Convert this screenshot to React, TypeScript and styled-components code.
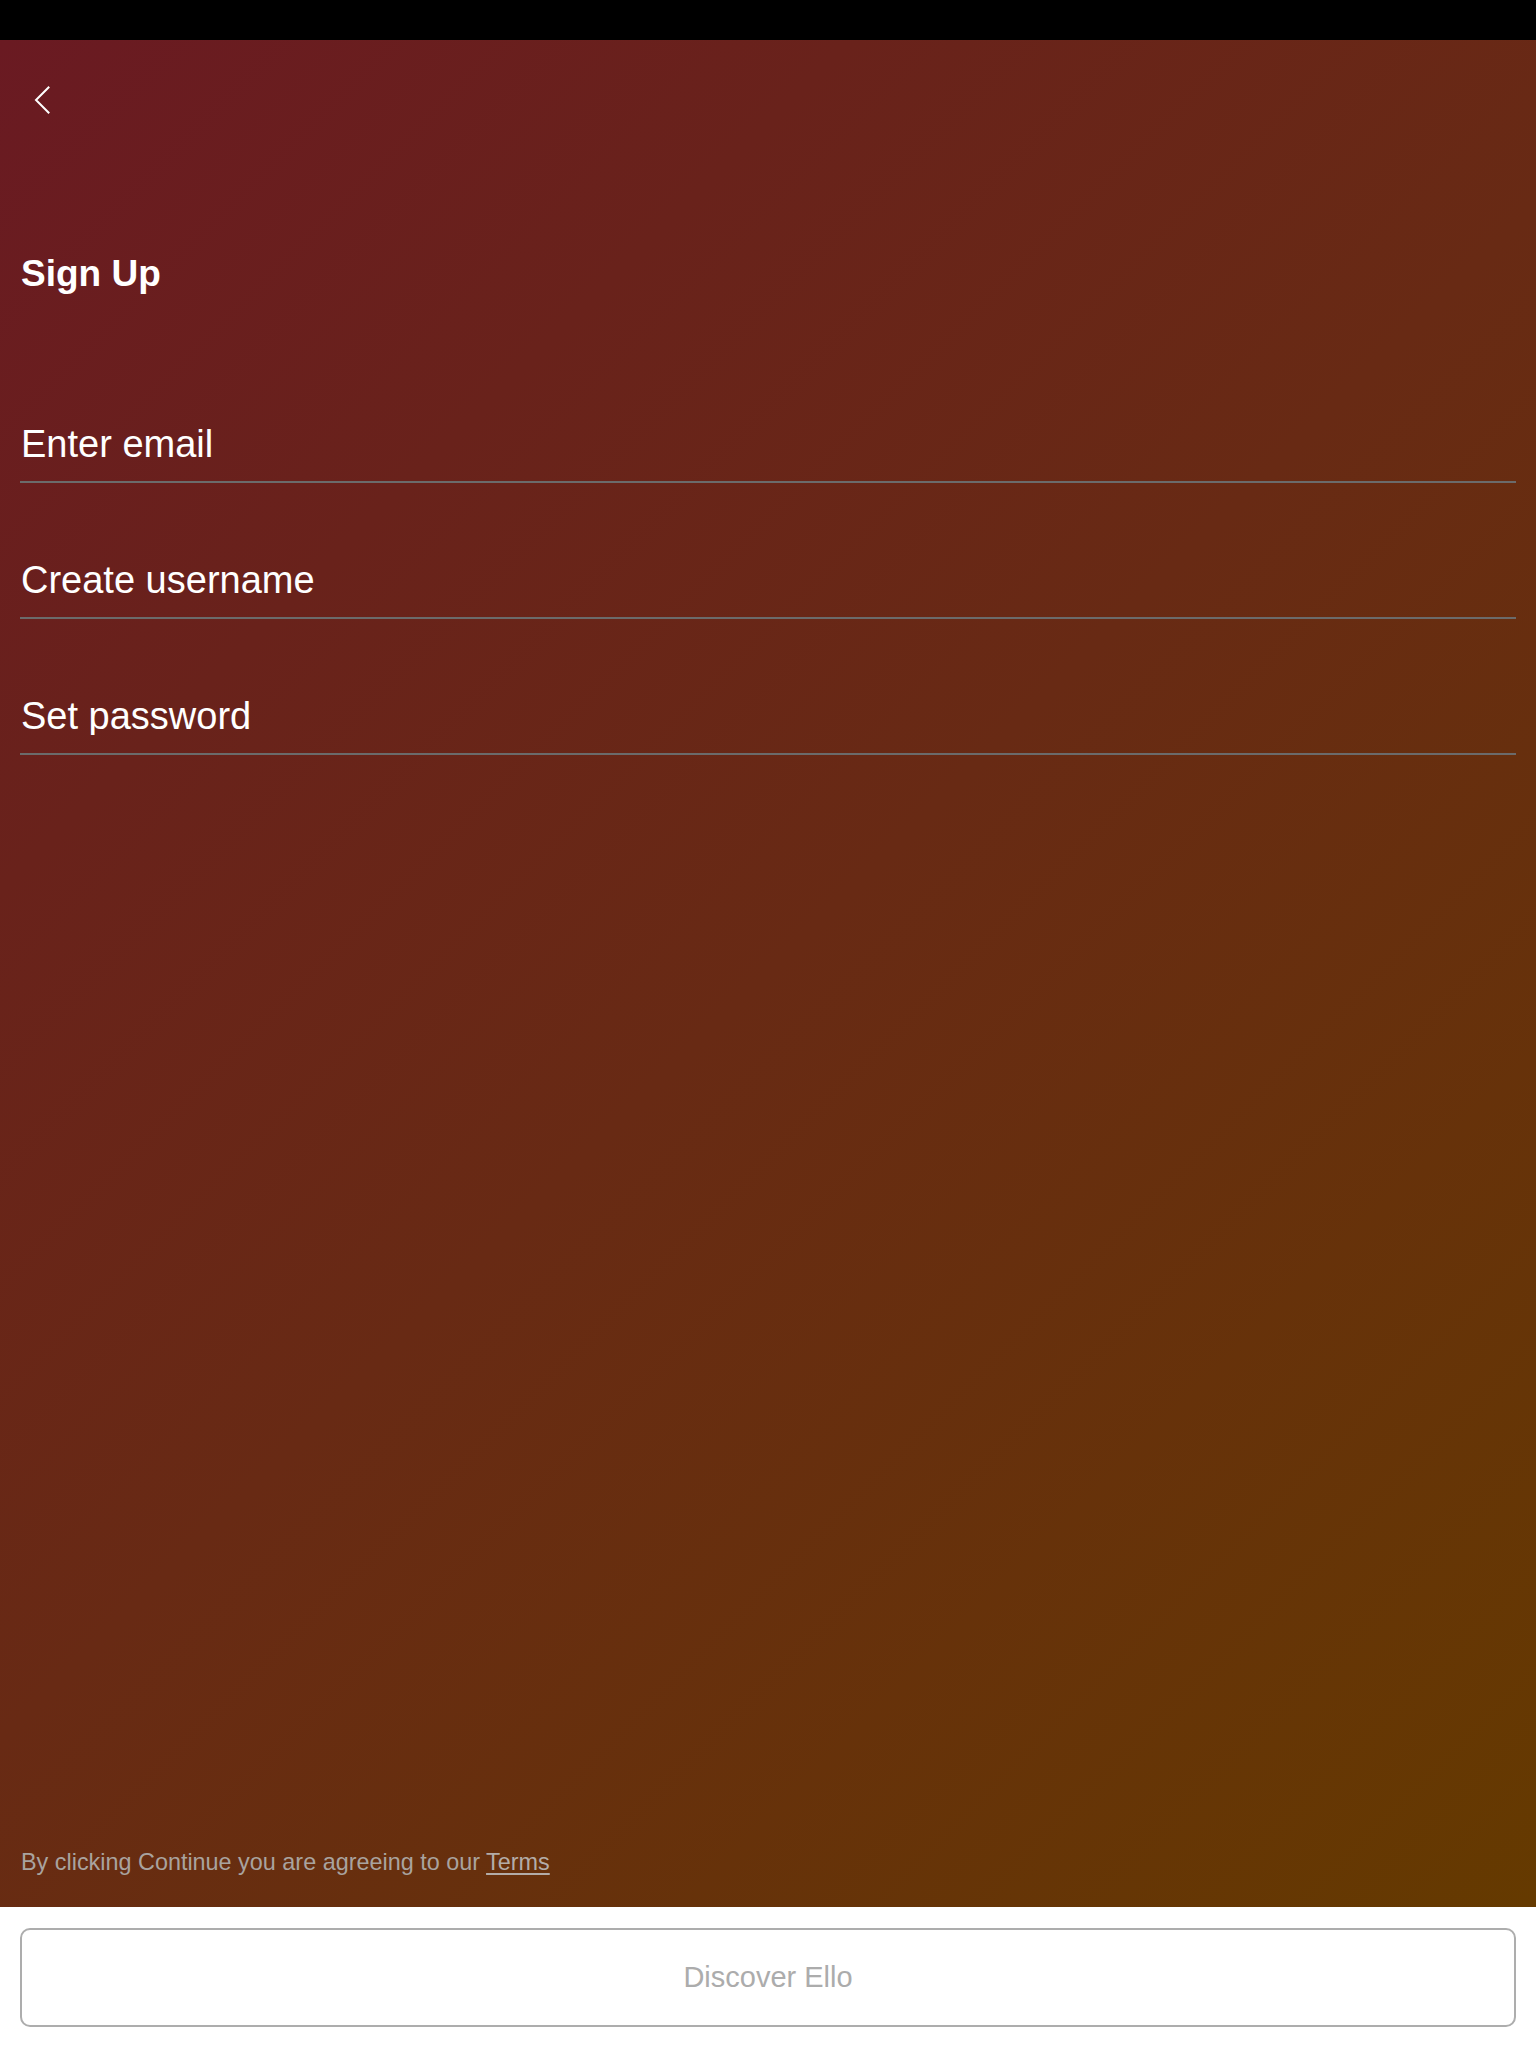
import React from "react";
import styled, { createGlobalStyle } from "styled-components";

const GlobalStyle = createGlobalStyle`
  html, body {
    margin: 0;
    padding: 0;
    background: #ffffff;
  }
  body {
    font-family: "Liberation Sans", Arial, sans-serif;
    -webkit-font-smoothing: antialiased;
  }
  * { box-sizing: border-box; }
`;

const Screen = styled.div`
  display: flex;
  flex-direction: column;
  min-height: 100vh;
  height: 2048px;
`;

const StatusBar = styled.div`
  height: 40px;
  flex: 0 0 40px;
  background: #000000;
`;

const Main = styled.main`
  flex: 1;
  display: flex;
  flex-direction: column;
  padding: 0 20px;
  background: linear-gradient(135deg, #6a1a22 0%, #682a14 50%, #653a00 100%);
`;

const BackButton = styled.button`
  display: flex;
  align-items: center;
  justify-content: center;
  width: 20px;
  height: 30px;
  margin: 45px 0 0 12px;
  padding: 0;
  border: none;
  background: transparent;
  cursor: pointer;
`;

const Title = styled.h1`
  margin: 141px 0 0 1px;
  font-family: "Liberation Sans", Arial, sans-serif;
  font-size: 37px;
  line-height: 36px;
  font-weight: 700;
  color: #ffffff;
  letter-spacing: 0;
`;

const FieldList = styled.div`
  display: flex;
  flex-direction: column;
  margin-top: 55px;
`;

const Field = styled.label`
  display: block;
  padding: 78px 0 18px;
  border-bottom: 2px solid #6b6b6b;
`;

const Input = styled.input`
  display: block;
  width: 100%;
  height: 38px;
  padding: 0 0 0 1px;
  margin: 0;
  border: none;
  outline: none;
  background: transparent;
  font-family: "Liberation Sans", Arial, sans-serif;
  font-size: 38px;
  line-height: 38px;
  color: #ffffff;
  &::placeholder {
    color: #ffffff;
    opacity: 1;
  }
`;

const Spacer = styled.div`
  flex: 1;
`;

const Terms = styled.p`
  margin: 0 0 33px 1px;
  font-family: "Liberation Sans", Arial, sans-serif;
  font-size: 23.4px;
  line-height: 24px;
  color: #a9a39f;
`;

const TermsLink = styled.a`
  color: #b3aca8;
  text-decoration: underline;
  text-underline-offset: 3px;
`;

const Footer = styled.footer`
  flex: 0 0 141px;
  background: #ffffff;
  padding: 21px 20px;
`;

const PrimaryButton = styled.button`
  display: flex;
  align-items: center;
  justify-content: center;
  width: 100%;
  height: 99px;
  border: 2px solid #adadad;
  border-radius: 10px;
  background: #ffffff;
  font-family: "Liberation Sans", Arial, sans-serif;
  font-size: 29px;
  color: #acacac;
  cursor: pointer;
`;

const ChevronLeft = () => (
  <svg width="18" height="28" viewBox="0 0 18 28" fill="none">
    <path
      d="M15.5 1.5 L3 14 L15.5 26.5"
      stroke="#ffffff"
      strokeWidth="2"
      strokeLinecap="square"
      strokeLinejoin="miter"
    />
  </svg>
);

const fields = [
  { placeholder: "Enter email", type: "email" },
  { placeholder: "Create username", type: "text" },
  { placeholder: "Set password", type: "password" },
];

export default function App() {
  return (
    <>
      <GlobalStyle />
      <Screen>
        <StatusBar />
        <Main>
          <BackButton aria-label="Back">
            <ChevronLeft />
          </BackButton>
          <Title>Sign Up</Title>
          <FieldList>
            {fields.map((f) => (
              <Field key={f.placeholder}>
                <Input type={f.type} placeholder={f.placeholder} />
              </Field>
            ))}
          </FieldList>
          <Spacer />
          <Terms>
            By clicking Continue you are agreeing to our <TermsLink href="#">Terms</TermsLink>
          </Terms>
        </Main>
        <Footer>
          <PrimaryButton>Discover Ello</PrimaryButton>
        </Footer>
      </Screen>
    </>
  );
}
